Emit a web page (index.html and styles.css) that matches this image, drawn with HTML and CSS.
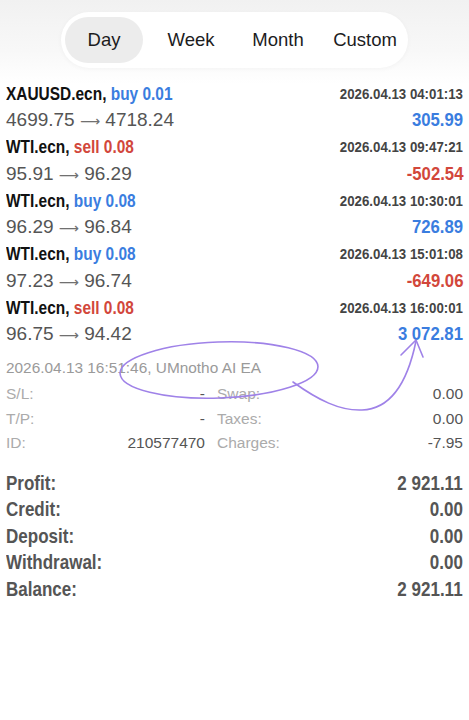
FILE: index.html
```html
<!DOCTYPE html>
<html>
<head>
<meta charset="utf-8">
<link rel="stylesheet" href="styles.css">
</head>
<body>
<div class="tabs-wrap">
  <div class="tabs">
    <div class="tab active">Day</div>
    <div class="tab">Week</div>
    <div class="tab">Month</div>
    <div class="tab">Custom</div>
  </div>
</div>

<div class="trades">
  <div class="trade">
    <div class="line l1"><span class="title">XAUUSD.ecn, <span class="buy">buy 0.01</span></span><span class="date">2026.04.13 04:01:13</span></div>
    <div class="line l2"><span class="price">4699.75 <span class="arr">⟶</span> 4718.24</span><span class="pl buy">305.99</span></div>
  </div>
  <div class="trade">
    <div class="line l1"><span class="title">WTI.ecn, <span class="sell">sell 0.08</span></span><span class="date">2026.04.13 09:47:21</span></div>
    <div class="line l2"><span class="price">95.91 <span class="arr">⟶</span> 96.29</span><span class="pl sell">-502.54</span></div>
  </div>
  <div class="trade">
    <div class="line l1"><span class="title">WTI.ecn, <span class="buy">buy 0.08</span></span><span class="date">2026.04.13 10:30:01</span></div>
    <div class="line l2"><span class="price">96.29 <span class="arr">⟶</span> 96.84</span><span class="pl buy">726.89</span></div>
  </div>
  <div class="trade">
    <div class="line l1"><span class="title">WTI.ecn, <span class="buy">buy 0.08</span></span><span class="date">2026.04.13 15:01:08</span></div>
    <div class="line l2"><span class="price">97.23 <span class="arr">⟶</span> 96.74</span><span class="pl sell">-649.06</span></div>
  </div>
  <div class="trade">
    <div class="line l1"><span class="title">WTI.ecn, <span class="sell">sell 0.08</span></span><span class="date">2026.04.13 16:00:01</span></div>
    <div class="line l2"><span class="price">96.75 <span class="arr">⟶</span> 94.42</span><span class="pl buy">3 072.81</span></div>
  </div>
</div>

<div class="details">
  <div class="dhead">2026.04.13 16:51:46, UMnotho AI EA</div>
  <div class="drow">
    <div class="cell"><span class="lbl">S/L:</span><span class="val">-</span></div>
    <div class="cell"><span class="lbl">Swap:</span><span class="val">0.00</span></div>
  </div>
  <div class="drow">
    <div class="cell"><span class="lbl">T/P:</span><span class="val">-</span></div>
    <div class="cell"><span class="lbl">Taxes:</span><span class="val">0.00</span></div>
  </div>
  <div class="drow">
    <div class="cell"><span class="lbl">ID:</span><span class="val">210577470</span></div>
    <div class="cell"><span class="lbl">Charges:</span><span class="val">-7.95</span></div>
  </div>
</div>

<div class="summary">
  <div class="srow"><span class="slbl">Profit:</span><span class="sval">2 921.11</span></div>
  <div class="srow"><span class="slbl">Credit:</span><span class="sval">0.00</span></div>
  <div class="srow"><span class="slbl">Deposit:</span><span class="sval">0.00</span></div>
  <div class="srow"><span class="slbl">Withdrawal:</span><span class="sval">0.00</span></div>
  <div class="srow"><span class="slbl">Balance:</span><span class="sval">2 921.11</span></div>
</div>

<svg class="annot" width="469" height="720" viewBox="0 0 469 720">
  <ellipse cx="219" cy="370" rx="99" ry="28" transform="rotate(-2 219 370)" />
  <path d="M293,382 C318,400 340,411 362,410 C392,409 408,380 416,341" />
  <path d="M401,355 L416,340 L423,357" />
</svg>
</body>
</html>
```

FILE: styles.css
```css
body {
  margin: 0;
  width: 469px;
  min-height: 720px;
  position: relative;
  font-family: "Liberation Sans", Arial, sans-serif;
  background: linear-gradient(to bottom, #f1f1f1 0px, #f8f8f8 50px, #ffffff 84px) no-repeat;
}

.tabs-wrap {
  display: flex;
  justify-content: center;
  padding-top: 12px;
}

.tabs {
  display: flex;
  gap: 9px;
  padding: 5px 4px;
  background: #ffffff;
  border-radius: 28px;
  box-shadow: 0 1px 5px rgba(0, 0, 0, 0.04);
}

.tab {
  width: 78px;
  height: 46px;
  display: flex;
  align-items: center;
  justify-content: center;
  font-size: 18.5px;
  color: #1c1c1e;
  border-radius: 23px;
}

.tab.active {
  background: #ececec;
}

.trades {
  margin-top: 13px;
  padding: 0 6px;
}

.line {
  display: flex;
  justify-content: space-between;
  align-items: center;
  white-space: nowrap;
}

.l1 { height: 25px; }
.l2 { height: 28.5px; }

.title,
.date,
.pl,
.slbl,
.sval {
  display: inline-block;
  font-family: "Liberation Sans", Arial, sans-serif;
  font-weight: bold;
  white-space: nowrap;
}

.title {
  font-size: 18.5px;
  color: #111111;
  transform: scaleX(0.835);
  transform-origin: left center;
}

.date {
  font-size: 15.5px;
  color: #444444;
  transform: scaleX(0.855);
  transform-origin: right center;
}

.price {
  font-size: 19px;
  color: #555555;
}

.arr {
  font-family: "DejaVu Sans", sans-serif;
  font-size: 14px;
  color: #707070;
}

.pl {
  font-size: 19px;
  transform: scaleX(0.88);
  transform-origin: right center;
}

.buy { color: #3a7ddf; }
.sell { color: #d2473b; }

.details {
  margin-top: 6px;
  padding: 0 6px;
}

.dhead {
  height: 27px;
  display: flex;
  align-items: center;
  font-size: 15.4px;
  color: #9a9a9a;
}

.drow {
  height: 24.7px;
  display: grid;
  grid-template-columns: 199px 246px;
  column-gap: 12px;
  align-items: center;
  font-size: 15.5px;
}

.cell {
  display: flex;
  justify-content: space-between;
}

.lbl { color: #ababab; }
.val { color: #555555; }

.summary {
  margin-top: 14px;
  padding: 0 6px;
}

.srow {
  height: 26.5px;
  display: flex;
  justify-content: space-between;
  align-items: center;
  color: #555555;
}

.slbl,
.sval {
  font-size: 21px;
  transform: scaleX(0.81);
}

.slbl { transform-origin: left center; }
.sval { transform-origin: right center; }

.annot {
  position: absolute;
  top: 0;
  left: 0;
  pointer-events: none;
  fill: none;
  stroke: #9f82e8;
  stroke-width: 1.6;
  stroke-linecap: round;
  stroke-linejoin: round;
}
```
